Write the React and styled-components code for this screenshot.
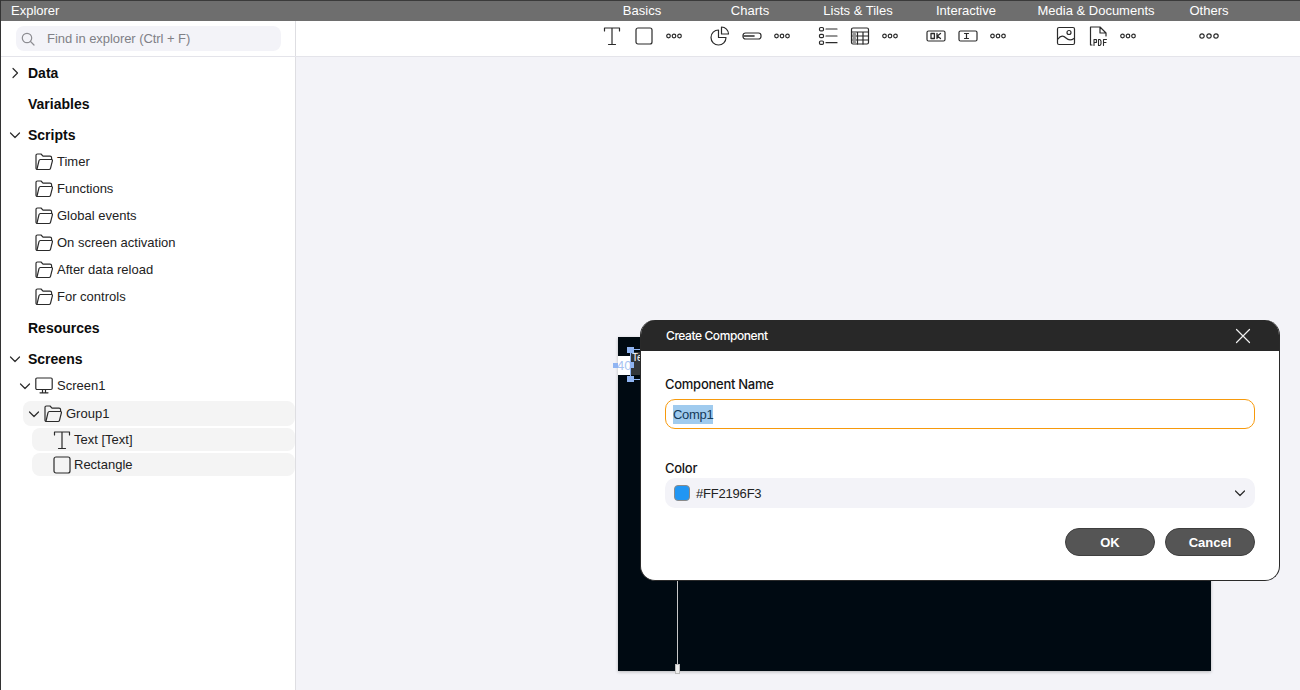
import React from 'react';
import styled, { createGlobalStyle } from 'styled-components';

const GlobalStyle = createGlobalStyle`
  html, body {
    margin: 0;
    padding: 0;
    background: #fff;
    font-family: "Liberation Sans", Arial, sans-serif;
    color: #1a1a1a;
  }
  * {
    box-sizing: border-box;
  }
`

const Page = styled.div`
  position: relative;
  width: 1300px;
  height: 690px;
  overflow: hidden;
  border-left: 1px solid #333;
  display: flex;
  flex-direction: column;
`

const TopBar = styled.div`
  display: flex;
  height: 21px;
  background: #6e6e6e;
  border-top: 1px solid #3a3a3a;
  color: #fff;
  font-size: 13px;
  line-height: 19px;
`

const TopTitle = styled.div`
  width: 587px;
  padding-left: 10px;
`

const TopLabel = styled.div`
  width: ${props => props.$width}px;
  text-align: center;
`

const ToolRow = styled.div`
  display: flex;
  height: 36px;
  border-bottom: 1px solid #e4e4ea;
`

const SearchCell = styled.div`
  width: 295px;
  padding: 5px 14px 0 15px;
  border-right: 1px solid #dedee2;
`

const SearchBox = styled.div`
  display: flex;
  align-items: center;
  height: 25px;
  padding-left: 5px;
  gap: 12px;
  background: #f3f3f8;
  border-radius: 8px;
  color: #808086;
  font-size: 13px;
  letter-spacing: -0.06px;
`

const ToolSpacer = styled.div`
  width: 292px;
`

const ToolGroup = styled.div`
  width: ${props => props.$width}px;
  display: flex;
  align-items: center;
  justify-content: center;
  gap: 12px;
  padding-bottom: ${props => props.$bottom || 6}px;
`

const Body = styled.div`
  flex: 1;
  display: flex;
  min-height: 0;
`

const Sidebar = styled.div`
  width: 295px;
  border-right: 1px solid #dedee2;
  background: #fff;
`

const SectionRow = styled.div`
  display: flex;
  align-items: center;
  height: 31px;
  padding-left: 9px;
  font-size: 14px;
  font-weight: 700;
  color: #0c0c0c;
`

const Chevron = styled.span`
  display: flex;
  width: 10px;
  margin-right: 8px;
  justify-content: center;
`

const ChildRow = styled.div`
  display: flex;
  align-items: center;
  height: ${props => props.$height || 27}px;
  margin-left: ${props => props.$left}px;
  margin-top: ${props => props.$top || 0}px;
  padding-left: ${props => props.$pad}px;
  gap: ${props => props.$gap || 4}px;
  font-size: 13px;
  color: #222;
  background: ${props => props.$active ? '#f4f4f4' : 'transparent'};
  border-radius: 8px;
`

const ScriptList = styled.div`
  margin-top: -3px;
  margin-bottom: 3px;
  padding-top: 1px;
  height: 162px;
`

const Canvas = styled.div`
  position: relative;
  flex: 1;
  background: #f3f3f8;
`

const Artboard = styled.div`
  position: absolute;
  left: 322px;
  top: 280px;
  width: 593px;
  height: 334px;
  background: #000a12;
  box-shadow: 0 1px 3px rgba(0, 0, 0, 0.25);
`

const WhiteChip = styled.div`
  position: absolute;
  left: 0;
  top: 19px;
  width: 13px;
  height: 19px;
  background: #fff;
`

const GreyChip = styled.div`
  position: absolute;
  left: 13px;
  top: 15px;
  width: 10px;
  height: 23px;
  background: #33373b;
  color: #fff;
  font-size: 10px;
  line-height: 12px;
  padding-left: 1px;
`

const SizeText = styled.div`
  position: absolute;
  left: -1px;
  top: 22px;
  color: #a9c3f2;
  font-size: 13px;
  line-height: 14px;
`

const Handle = styled.div`
  position: absolute;
  left: ${props => props.$x}px;
  top: ${props => props.$y}px;
  width: ${props => props.$w}px;
  height: ${props => props.$h}px;
  background: #8fb4f2;
`

const GuideLine = styled.div`
  position: absolute;
  left: 59px;
  top: 243px;
  width: 1px;
  height: 85px;
  background: #c8c8c8;
`

const GuideKnob = styled.div`
  position: absolute;
  left: 57px;
  top: 327px;
  width: 5px;
  height: 10px;
  background: #eee;
  border: 1px solid #bbb;
`

const Dialog = styled.div`
  position: absolute;
  left: 639px;
  top: 320px;
  width: 640px;
  height: 261px;
  background: #fff;
  border: 1px solid #2a2a2a;
  border-top: 0;
  border-radius: 15px;
  overflow: hidden;
`

const DialogHeader = styled.div`
  display: flex;
  align-items: center;
  justify-content: space-between;
  height: 31px;
  padding: 0 28px 0 25px;
  background: #282828;
  color: #fff;
  font-family: Inter, "Liberation Sans", sans-serif;
  font-size: 12px;
  font-weight: 500;
  letter-spacing: -0.42px;
`

const DialogBody = styled.div`
  padding: 25px 24px 0;
`

const FieldLabel = styled.div`
  font-family: Inter, "Liberation Sans", sans-serif;
  font-size: 13px;
  font-weight: 500;
  line-height: 16px;
  letter-spacing: -0.27px;
  color: #151515;
  margin-top: ${props => props.$top || 0}px;
`

const NameInput = styled.div`
  display: flex;
  align-items: center;
  height: 30px;
  margin-top: 7px;
  padding-left: 7px;
  border: 1px solid #f79a0c;
  border-radius: 10px;
  font-size: 13px;
  letter-spacing: -0.3px;
`

const Selected = styled.span`
  display: block;
  height: 19px;
  line-height: 19px;
  background: #a0cbee;
  color: #143a5a;
`

const ColorSelect = styled.div`
  display: flex;
  align-items: center;
  height: 30px;
  margin-top: 2px;
  padding: 0 9px 0 9px;
  gap: 6px;
  background: #f3f3f8;
  border-radius: 10px;
  font-size: 13px;
  letter-spacing: -0.2px;
  color: #222;
`

const Swatch = styled.span`
  width: 16px;
  height: 16px;
  background: ${props => props.$color};
  border: 1px solid #8a8a8a;
  border-radius: 4px;
`

const SelectArrow = styled.span`
  display: flex;
  margin-left: auto;
`

const Actions = styled.div`
  display: flex;
  justify-content: flex-end;
  gap: 10px;
  margin-top: 20px;
`

const ActionButton = styled.div`
  width: 90px;
  height: 28px;
  display: flex;
  align-items: center;
  justify-content: center;
  background: #555;
  border: 1px solid #3f3f3f;
  border-radius: 14px;
  color: #fff;
  font-size: 13px;
  font-weight: 700;
`

const line = { fill: 'none', stroke: '#2b2b2b', strokeWidth: 1.2, strokeLinecap: 'round', strokeLinejoin: 'round' };

const Ico = ({ w = 20, h = 20, children }) => (
  <svg width={w} height={h} viewBox={`0 0 ${w} ${h}`} {...line} style={{ flex: 'none', display: 'block' }}>{children}</svg>
);

const ChevronRight = () => <Ico w={8} h={12}><path d="M2 1.5 L6.5 6 L2 10.5" /></Ico>;
const ChevronDown = () => <Ico w={12} h={8}><path d="M1.5 2 L6 6.5 L10.5 2" /></Ico>;

const TextIcon = () => (
  <Ico>
    <path d="M2.5 5 V2 H17.5 V5 M10 2 V18.5 M6.5 18.5 H13.5" />
  </Ico>
);

const RectIcon = () => (
  <Ico><rect x="2" y="2" width="16" height="16" rx="2" /></Ico>
);

const Dots = ({ big }) => (
  <Ico w={big ? 20 : 16} h={big ? 8 : 6}>
    {big
      ? [3, 10, 17].map(x => <circle key={x} cx={x} cy="4" r="2.2" />)
      : [2.5, 8, 13.5].map(x => <circle key={x} cx={x} cy="3" r="1.8" />)}
  </Ico>
);

const PieIcon = () => (
  <Ico>
    <path d="M8.5 4 A7.5 7.5 0 1 0 16 11.5 H8.5 Z" />
    <path d="M11.5 1 A7 7 0 0 1 18.5 8 H11.5 Z" />
  </Ico>
);

const PillIcon = () => (
  <Ico h={8}>
    <rect x="1" y="1" width="18" height="6" rx="2.5" />
    <path d="M2 4 H12" strokeWidth="1.6" />
  </Ico>
);

const ListIcon = () => (
  <Ico>
    <rect x="1.5" y="1.5" width="4" height="3.4" rx="1.2" />
    <rect x="1.5" y="8.3" width="4" height="3.4" rx="1.2" />
    <rect x="1.5" y="15" width="4" height="3.4" rx="1.2" />
    <path d="M8 3 H19 M8 10 H19 M8 16.7 H19" />
  </Ico>
);

const TableIcon = () => (
  <Ico>
    <rect x="1.5" y="2" width="17" height="16" rx="1.5" />
    <path d="M1.5 6 H18.5 M1.5 10 H18.5 M1.5 14 H18.5 M7.5 6 V18 M13 6 V18" />
    <path d="M3 8 H5.5 M3 12 H5.5 M3 16 H5.5" />
  </Ico>
);

const OkIcon = () => (
  <Ico h={12}>
    <rect x="1" y="1" width="18" height="10" rx="1.5" />
    <rect x="5" y="3.5" width="3.4" height="5" strokeWidth="1.3" />
    <path d="M11 3.5 V8.5 M14.5 3.5 L11.3 6 L14.5 8.5" strokeWidth="1.3" />
  </Ico>
);

const InputIcon = () => (
  <Ico h={12}>
    <rect x="1" y="1" width="18" height="10" rx="1.5" />
    <path d="M6.5 3.5 H10.5 M8.5 3.5 V8.5 M6.5 8.5 H10.5" strokeWidth="1.2" />
  </Ico>
);

const ImageIcon = () => (
  <Ico>
    <rect x="1.5" y="1.5" width="17" height="17" rx="1.5" />
    <circle cx="13" cy="6.5" r="2" />
    <path d="M2 13 C5 8.5 8 10 10 12 C12 14 15 14.5 18 12.5" />
  </Ico>
);

const PdfIcon = () => (
  <Ico>
    <path d="M4 19 H2.5 V1 H12 L18 7 V10 M12 1 V7 H18" />
    <path d="M6 19.5 V13.5 H8.4 V16.5 H6 M10.5 13.5 V19.5 H12 L13 18 V15 L12 13.5 H10.5 M15.5 19.5 V13.5 H18.5 M15.5 16.5 H18" strokeWidth="1.1" />
  </Ico>
);

const FolderIcon = () => (
  <Ico w={18} h={18}>
    <path d="M2.5 16.5 C1.6 16.5 1 16 1 15 V2.5 C1 1.6 1.5 1 2.5 1 H6 L8 3.2 H15 C16 3.2 16.6 3.8 16.6 4.8 V6.5" />
    <path d="M2.5 16.5 H14 C14.8 16.5 15.3 16 15.5 15.3 L17.4 7.8 C17.6 7 17.2 6.5 16.4 6.5 H5.4 C4.7 6.5 4.2 6.9 4 7.6 L2 16" />
  </Ico>
);

const MonitorIcon = () => (
  <Ico w={18} h={18}>
    <rect x="0.8" y="1" width="16.4" height="11.5" rx="1.2" />
    <path d="M7.5 12.5 V15.5 M10.5 12.5 V15.5 M5 15.8 H13" />
  </Ico>
);

const SearchIcon = () => (
  <Ico w={14} h={14}>
    <g stroke="#8d8d92"><circle cx="6" cy="6" r="4.7" /><path d="M9.5 9.5 L13 13" /></g>
  </Ico>
);

const CloseIcon = () => (
  <Ico w={16} h={16}><path d="M1.5 1.5 L14.5 14.5 M14.5 1.5 L1.5 14.5" stroke="#f0f0f0" /></Ico>
);

const scriptFolders = ['Timer', 'Functions', 'Global events', 'On screen activation', 'After data reload', 'For controls'];

const App = () => (
  <Page>
    <GlobalStyle />
    <TopBar>
      <TopTitle>Explorer</TopTitle>
      <TopLabel $width={108}>Basics</TopLabel>
      <TopLabel $width={108}>Charts</TopLabel>
      <TopLabel $width={108}>Lists &amp; Tiles</TopLabel>
      <TopLabel $width={108}>Interactive</TopLabel>
      <TopLabel $width={152}>Media &amp; Documents</TopLabel>
      <TopLabel $width={74}>Others</TopLabel>
    </TopBar>
    <ToolRow>
      <SearchCell>
        <SearchBox><SearchIcon />Find in explorer (Ctrl + F)</SearchBox>
      </SearchCell>
      <ToolSpacer />
      <ToolGroup $width={108}><TextIcon /><RectIcon /><Dots /></ToolGroup>
      <ToolGroup $width={108}><PieIcon /><PillIcon /><Dots /></ToolGroup>
      <ToolGroup $width={108}><ListIcon /><TableIcon /><Dots /></ToolGroup>
      <ToolGroup $width={108}><OkIcon /><InputIcon /><Dots /></ToolGroup>
      <ToolGroup $width={152}><ImageIcon /><PdfIcon /><Dots /></ToolGroup>
      <ToolGroup $width={74} $bottom={5}><Dots big /></ToolGroup>
    </ToolRow>
    <Body>
      <Sidebar>
        <SectionRow><Chevron><ChevronRight /></Chevron>Data</SectionRow>
        <SectionRow><Chevron />Variables</SectionRow>
        <SectionRow><Chevron><ChevronDown /></Chevron>Scripts</SectionRow>
        <ScriptList>
          {scriptFolders.map(name => (
            <ChildRow key={name} $left={0} $pad={34}><FolderIcon />{name}</ChildRow>
          ))}
        </ScriptList>
        <SectionRow><Chevron />Resources</SectionRow>
        <SectionRow><Chevron><ChevronDown /></Chevron>Screens</SectionRow>
        <ChildRow $left={0} $pad={18} $top={-2}><ChevronDown /><MonitorIcon />Screen1</ChildRow>
        <ChildRow $left={22} $pad={5} $height={25} $top={2} $active><ChevronDown /><FolderIcon />Group1</ChildRow>
        <ChildRow $left={31} $pad={20} $height={23} $top={2} $gap={2} $active><TextIcon />Text [Text]</ChildRow>
        <ChildRow $left={31} $pad={20} $height={23} $top={2} $gap={2} $active><RectIcon />Rectangle</ChildRow>
      </Sidebar>
      <Canvas>
        <Artboard>
          <WhiteChip />
          <GreyChip>Te</GreyChip>
          <SizeText>40</SizeText>
          <Handle $x={12} $y={12} $w={1} $h={30} />
          <Handle $x={12} $y={12} $w={10} $h={1} />
          <Handle $x={12} $y={42} $w={10} $h={1} />
          <Handle $x={9} $y={10} $w={7} $h={6} />
          <Handle $x={-5} $y={26} $w={5} $h={5} />
          <Handle $x={13} $y={25} $w={3} $h={6} />
          <Handle $x={9} $y={39} $w={7} $h={6} />
          <GuideLine />
          <GuideKnob />
        </Artboard>
      </Canvas>
    </Body>
    <Dialog>
      <DialogHeader>Create Component<CloseIcon /></DialogHeader>
      <DialogBody>
        <FieldLabel>Component Name</FieldLabel>
        <NameInput><Selected>Comp1</Selected></NameInput>
        <FieldLabel $top={31}>Color</FieldLabel>
        <ColorSelect>
          <Swatch $color="#2196f3" />
          #FF2196F3
          <SelectArrow><ChevronDown /></SelectArrow>
        </ColorSelect>
        <Actions>
          <ActionButton>OK</ActionButton>
          <ActionButton>Cancel</ActionButton>
        </Actions>
      </DialogBody>
    </Dialog>
  </Page>
);

export default App;
